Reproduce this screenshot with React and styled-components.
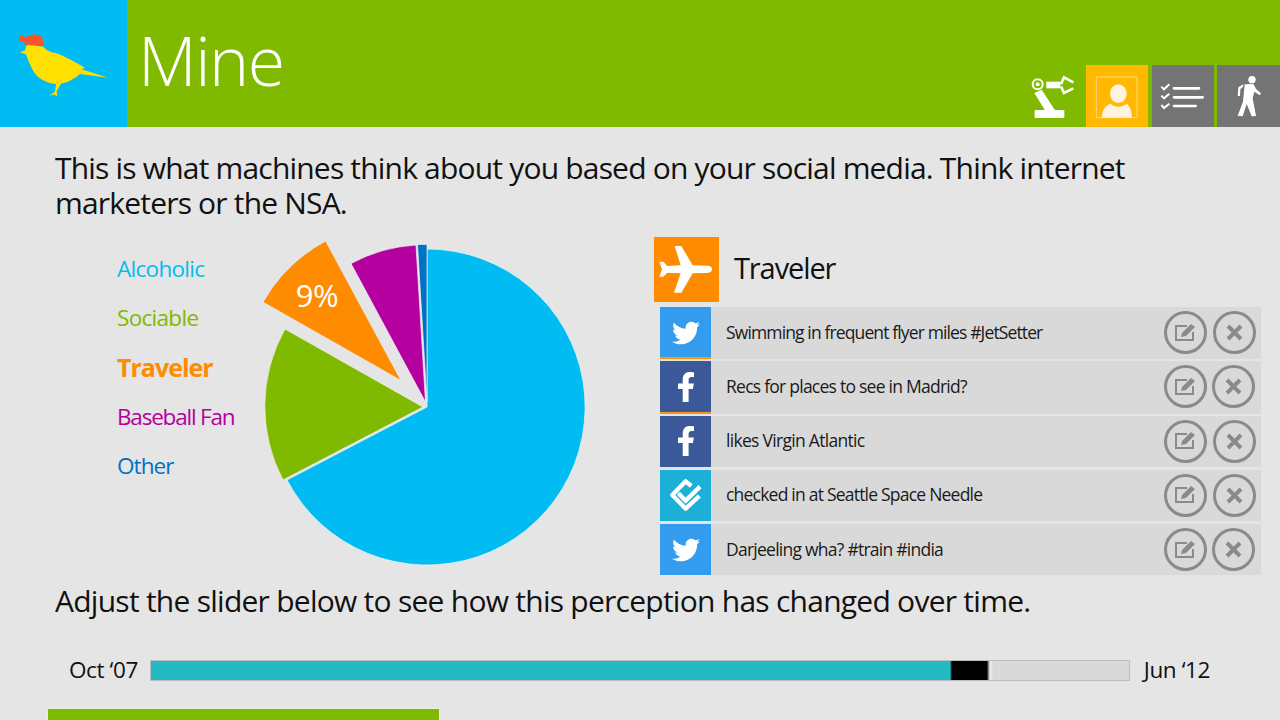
import styled, { createGlobalStyle } from "styled-components";
import { FaTwitter, FaFacebookF } from "react-icons/fa";

const GlobalStyle = createGlobalStyle`
  html, body {
    margin: 0;
    padding: 0;
    background: #e5e5e5;
  }
  body {
    font-family: "Open Sans", "Noto Sans", sans-serif;
    color: #111;
  }
`;

const labels = [
  { name: "Alcoholic", color: "#00bcf2", tracking: -0.7 },
  { name: "Sociable", color: "#7fba00", tracking: -0.7 },
  { name: "Traveler", color: "#ff8c00", tracking: -1, active: true },
  { name: "Baseball Fan", color: "#b4009e", tracking: -1.2 },
  { name: "Other", color: "#0072c6", tracking: -0.9 },
];

const posts = [
  { kind: "twitter", text: "Swimming in frequent flyer miles #JetSetter", tracking: -0.87, marked: true },
  { kind: "facebook", text: "Recs for places to see in Madrid?", tracking: -0.75, marked: true, tight: true },
  { kind: "facebook", text: "likes Virgin Atlantic", tracking: -0.7 },
  { kind: "foursquare", text: "checked in at Seattle Space Needle", tracking: -0.78 },
  { kind: "twitter", text: "Darjeeling wha? #train #india", tracking: -0.75, tight: true },
];

const sourceColors = {
  twitter: "#339cee",
  facebook: "#3b5998",
  foursquare: "#1cafd8",
};

const Page = styled.div`
  width: 1280px;
  height: 720px;
  overflow: hidden;
  background: #e5e5e5;
`;

const Header = styled.header`
  height: 127px;
  display: flex;
  background: #7fba00;
`;

const Logo = styled.div`
  width: 127px;
  height: 127px;
  background: #00bcf2;
  svg {
    display: block;
  }
`;

const Title = styled.h1`
  margin: 0 0 0 11px;
  font-size: 68px;
  font-weight: 300;
  line-height: 120px;
  letter-spacing: -1.5px;
  color: #fff;
`;

const Tabs = styled.nav`
  margin-left: auto;
  align-self: flex-end;
  display: flex;
  gap: 3.4px;
`;

const Tab = styled.div`
  width: ${(p) => (p.$wide ? "63px" : "62px")};
  height: 62px;
  background: ${(p) => p.$bg || "transparent"};
  svg {
    display: block;
  }
`;

const Main = styled.main`
  padding: 23px 0 0 55px;
`;

const Lead = styled.p`
  margin: 0;
  width: 1100px;
  font-size: 30px;
  line-height: 35px;
  letter-spacing: -0.81px;
`;

const ChartRow = styled.section`
  display: flex;
  margin-top: 17px;
`;

const LabelList = styled.ul`
  list-style: none;
  margin: 7px 0 0 62px;
  padding: 0;
  width: 143px;
  flex: none;
`;

const Label = styled.li`
  height: 49.25px;
  line-height: 49.25px;
  white-space: nowrap;
  font-size: ${(p) => (p.$active ? "25px" : "22.5px")};
  font-weight: ${(p) => (p.$active ? 700 : 400)};
  letter-spacing: ${(p) => p.$tracking}px;
  color: ${(p) => p.$color};
`;

const Pie = styled.svg`
  display: block;
  flex: none;
  width: 330px;
  height: 330px;
  margin-top: 3px;
`;

const PieText = styled.text`
  font-size: 31px;
  letter-spacing: -0.5px;
  fill: #fff;
`;

const Panel = styled.div`
  width: 607px;
  margin-left: 64px;
`;

const PanelHead = styled.div`
  display: flex;
  align-items: center;
  gap: 15px;
  height: 65px;
  margin-bottom: 5px;
`;

const CategoryTile = styled.div`
  width: 65px;
  height: 65px;
  background: #ff8c00;
  svg {
    display: block;
  }
`;

const CategoryName = styled.h2`
  margin: 0;
  padding-bottom: 4px;
  font-size: 29px;
  font-weight: 400;
  letter-spacing: -1.1px;
`;

const Rows = styled.div`
  display: flex;
  flex-direction: column;
  gap: 3px;
  margin-left: 6px;
`;

const Row = styled.div`
  position: relative;
  display: flex;
  align-items: center;
  height: 51.25px;
  background: #d9d9d9;
  box-shadow: ${(p) => (p.$marked ? "0 1px 0 #d9d9d9" : "none")};
`;

const Source = styled.div`
  flex: none;
  align-self: stretch;
  width: 51px;
  display: flex;
  align-items: center;
  justify-content: center;
  color: #fff;
  background: ${(p) => sourceColors[p.$kind]};
  box-shadow: ${(p) => (p.$marked ? "0 1px 0 #ff8c00, inset 0 -1px 0 #ff9a20" : "none")};
`;

const PostText = styled.span`
  margin-left: 15px;
  padding-bottom: 2px;
  font-size: 17.5px;
  letter-spacing: ${(p) => p.$tracking}px;
  color: #1a1a1a;
  white-space: nowrap;
`;

const Actions = styled.div`
  margin-left: auto;
  display: flex;
  gap: ${(p) => (p.$tight ? "5px" : "6px")};
  padding-right: ${(p) => (p.$tight ? "6px" : "5px")};
`;

const RoundButton = styled.button`
  width: 43px;
  height: 43px;
  padding: 0;
  border: 3px solid #8a8a8a;
  border-radius: 50%;
  background: transparent;
  display: flex;
  align-items: center;
  justify-content: center;
`;

const Note = styled.p`
  margin: 6px 0 0;
  font-size: 30px;
  line-height: 40px;
  letter-spacing: -0.74px;
`;

const SliderRow = styled.div`
  display: flex;
  align-items: center;
  height: 21px;
  margin: 39px 0 0 14px;
`;

const SliderLabel = styled.span`
  flex: none;
  width: ${(p) => p.$width}px;
  padding-bottom: 2px;
  font-size: 22.5px;
  letter-spacing: -0.4px;
  white-space: nowrap;
  text-align: ${(p) => p.$align};
`;

const Track = styled.div`
  width: 980px;
  height: 21px;
  box-sizing: border-box;
  display: flex;
  border: 1px solid #bdbdbd;
  background: #d9d9d9;
`;

const TrackFill = styled.div`
  background: #23bac4;
`;

const TrackWindow = styled.div`
  width: 43px;
  background: linear-gradient(
    90deg,
    #23bac4 0,
    #000 2px,
    #000 37px,
    #666 38px,
    #f0f0f0 40px,
    #d9d9d9 43px
  );
`;

const FooterBar = styled.div`
  width: 391px;
  height: 11px;
  margin: 27px 0 0 -8px;
  border: 1px solid #e9f0d8;
  border-bottom: 0;
  background: #7fba00;
`;

function Bird() {
  return (
    <svg width="127" height="127" viewBox="0 0 381 381">
      <path
        fill="#f7542b"
        d="M58 103 L76 112 C90 102 112 100 124 110 C130 118 131 128 130 139 L76 134 L70 122 L58 126 Z"
      />
      <path
        fill="#ffe000"
        d="M60 157 L76 151 C76 142 78 136 84 134 L130 140 C140 152 150 155 170 160 C200 172 232 190 255 204 L244 208 L325 233 L240 222 C225 235 205 247 183 251 C177 262 170 272 170 276 L172 289 L160 283 L144 289 L165 275 L168 252 C135 250 108 232 97 208 C88 190 82 175 78 163 Z"
      />
    </svg>
  );
}

function RobotIcon() {
  return (
    <svg width="62" height="62" viewBox="2 30 186 186">
      <rect x="43" y="165" width="89" height="24" rx="3" fill="#fff" />
      <path fill="#fff" d="M42 114 L64 104 L104 166 L74 166 Z" />
      <circle cx="52" cy="88" r="15" fill="none" stroke="#fff" strokeWidth="6" />
      <circle cx="52" cy="88" r="6" fill="#fff" />
      <rect x="78" y="80" width="42" height="20" fill="#fff" />
      <path
        fill="none"
        stroke="#fff"
        strokeWidth="8"
        d="M122 88 L131 67 L159 82 M122 94 L131 114 L159 100"
      />
    </svg>
  );
}

function PersonIcon() {
  return (
    <svg width="62" height="62" viewBox="198 30 186 186">
      <rect x="229" y="66" width="122" height="122" fill="none" stroke="#ffd77a" strokeWidth="3" />
      <ellipse cx="295" cy="116" rx="25" ry="28" fill="#fff3df" />
      <path
        fill="#fff3df"
        d="M245 188 C246 165 255 152 272 146 C285 158 305 158 320 146 C330 152 336 170 336 188 Z"
      />
    </svg>
  );
}

function ChecklistIcon() {
  return (
    <svg width="62" height="62" viewBox="396 30 186 186">
      <path
        fill="none"
        stroke="#fff"
        strokeWidth="8"
        strokeLinecap="round"
        d="M462 100 H537 M462 127 H548 M462 153 H527"
      />
      <path
        fill="none"
        stroke="#fff"
        strokeWidth="6"
        d="M424 95 L432 103 L448 88 M424 122 L432 130 L448 116 M424 150 L432 159 L448 146"
      />
    </svg>
  );
}

function WalkerIcon() {
  return (
    <svg width="63" height="62" viewBox="591 30 189 186">
      <circle cx="696" cy="74" r="11" fill="#fff" />
      <path
        fill="#fff"
        d="M674 88 L700 87 L709 103 L723 115 L719 121 L703 110 L698 130 L708 183 L695 184 L680 147 L668 184 L653 182 L669 140 L673 100 Z"
      />
      <path fill="#fff" d="M655 97 L670 88 L669 95 L661 103 L660 124 L653 122 Z" />
    </svg>
  );
}

function PlaneIcon() {
  return (
    <svg width="65" height="65" viewBox="12 21 195 195">
      <path
        fill="#fff"
        d="M186 118 Q186 108 172 107 L128 106 L94 48 L74 48 L92 106 L52 108 L40 95 L28 95 L36 118 L28 140 L40 140 L52 128 L92 130 L72 188 L94 188 L128 130 L172 129 Q186 128 186 118 Z"
      />
    </svg>
  );
}

function FoursquareIcon() {
  return (
    <svg width="51" height="51" viewBox="30 180 153 153">
      <path
        fill="none"
        stroke="#fff"
        strokeWidth="13"
        strokeLinejoin="round"
        d="M124 228 L107 214 L67 255 L107 296 L148 258"
      />
      <path fill="none" stroke="#fff" strokeWidth="13" d="M85 250 L107 272 L150 230" />
    </svg>
  );
}

function EditIcon() {
  return (
    <svg width="21" height="18" viewBox="0 0 21 18">
      <path fill="none" stroke="#8a8a8a" strokeWidth="2" d="M12 2 H1 V16 H18 V8" />
      <path fill="#8a8a8a" d="M6 13 L7 9 L16 0 L20 3 L11 12 Z" />
    </svg>
  );
}

function CloseIcon() {
  return (
    <svg width="17" height="17" viewBox="0 0 17 17">
      <path stroke="#8a8a8a" strokeWidth="4" d="M2 2 L15 15 M15 2 L2 15" />
    </svg>
  );
}

function SourceIcon({ kind }) {
  if (kind === "twitter") return <FaTwitter size={28} />;
  if (kind === "facebook") return <FaFacebookF size={30} />;
  return <FoursquareIcon />;
}

export default function App() {
  return (
    <Page>
      <GlobalStyle />
      <Header>
        <Logo>
          <Bird />
        </Logo>
        <Title>Mine</Title>
        <Tabs>
          <Tab>
            <RobotIcon />
          </Tab>
          <Tab $bg="#ffb900">
            <PersonIcon />
          </Tab>
          <Tab $bg="#747474">
            <ChecklistIcon />
          </Tab>
          <Tab $bg="#747474" $wide>
            <WalkerIcon />
          </Tab>
        </Tabs>
      </Header>
      <Main>
        <Lead>
          This is what machines think about you based on your social media. Think internet
          marketers or the NSA.
        </Lead>
        <ChartRow>
          <LabelList>
            {labels.map((label) => (
              <Label key={label.name} $color={label.color} $active={label.active} $tracking={label.tracking}>
                {label.name}
              </Label>
            ))}
          </LabelList>
          <Pie viewBox="260 240 330 330">
            <g stroke="#f2f2f2" strokeWidth="1" strokeOpacity="0.7">
              <path fill="#00bcf2" d="M427 407 L427 249 A158 158 0 1 1 287 480 Z" />
              <path fill="#7fba00" d="M423 407 L285 329 A158 158 0 0 0 283 480 Z" />
              <path fill="#0072c6" d="M427 402 L417.5 244.5 A157 157 0 0 1 427 244.5 Z" />
              <path fill="#b4009e" d="M425.5 402 L351 263.5 A157 157 0 0 1 416 245 Z" />
            </g>
            <path fill="#ff8c00" d="M400 379.5 L325.5 241.5 A157 157 0 0 0 263.5 302 Z" />
            <PieText x="317" y="307" textAnchor="middle">
              9%
            </PieText>
          </Pie>
          <Panel>
            <PanelHead>
              <CategoryTile>
                <PlaneIcon />
              </CategoryTile>
              <CategoryName>Traveler</CategoryName>
            </PanelHead>
            <Rows>
              {posts.map((post) => (
                <Row key={post.text} $marked={post.marked}>
                  <Source $kind={post.kind} $marked={post.marked}>
                    <SourceIcon kind={post.kind} />
                  </Source>
                  <PostText $tracking={post.tracking}>{post.text}</PostText>
                  <Actions $tight={post.tight}>
                    <RoundButton aria-label="edit">
                      <EditIcon />
                    </RoundButton>
                    <RoundButton aria-label="remove">
                      <CloseIcon />
                    </RoundButton>
                  </Actions>
                </Row>
              ))}
            </Rows>
          </Panel>
        </ChartRow>
        <Note>Adjust the slider below to see how this perception has changed over time.</Note>
        <SliderRow>
          <SliderLabel $width={81}>Oct ‘07</SliderLabel>
          <Track>
            <TrackFill style={{ width: 799 }} />
            <TrackWindow />
          </Track>
          <SliderLabel $width={80} $align="right">
            Jun ‘12
          </SliderLabel>
        </SliderRow>
        <FooterBar />
      </Main>
    </Page>
  );
}
